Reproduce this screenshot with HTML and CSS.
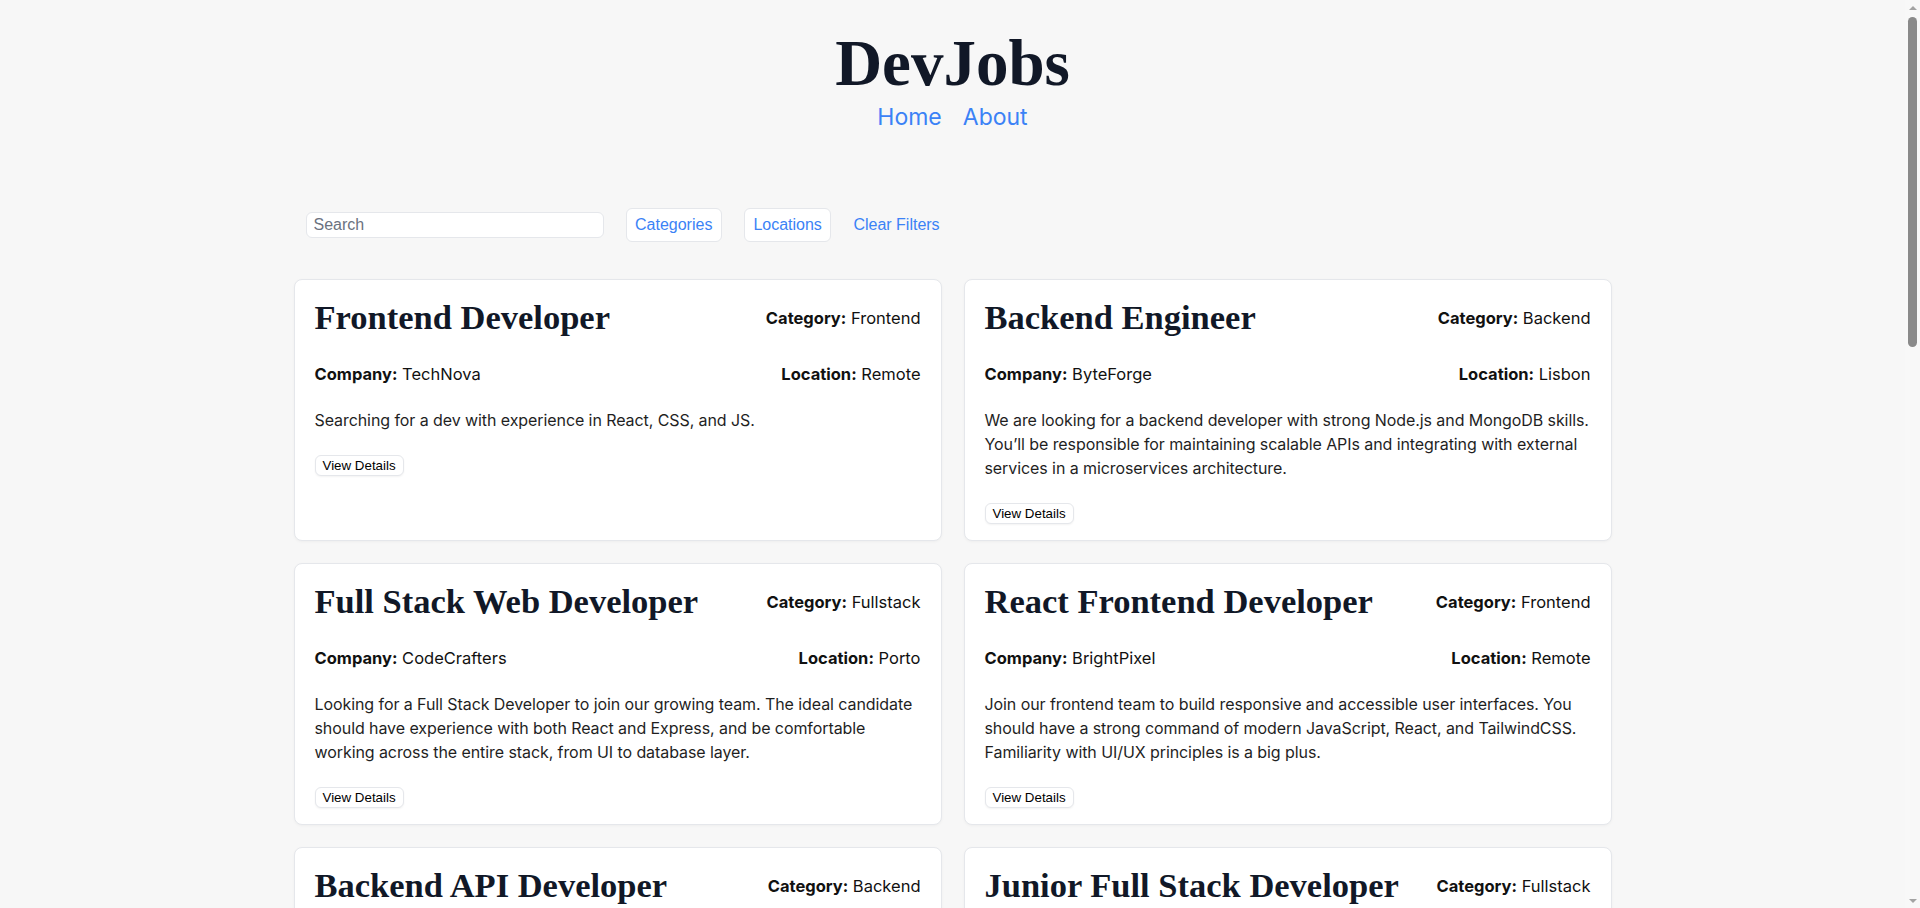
FILE: index.html
```html
<!DOCTYPE html>
<html lang="en">
<head>
<meta charset="utf-8">
<title>DevJobs</title>
<link rel="stylesheet" href="styles.css">
</head>
<body>
<div class="page">
<header class="site-header">
  <h1 class="logo">DevJobs</h1>
  <nav class="nav">
    <a href="#" class="nav-link">Home</a>
    <a href="#" class="nav-link">About</a>
  </nav>
</header>
<main class="container">
  <div class="filters">
    <input class="search" type="text" placeholder="Search">
    <button class="filter-btn">Categories</button>
    <button class="filter-btn">Locations</button>
    <button class="clear-btn">Clear Filters</button>
  </div>
  <div class="job-grid">
    <article class="card">
      <div class="card-head"><h2 class="job-title">Frontend Developer</h2><span class="meta"><b>Category:</b> Frontend</span></div>
      <div class="card-row"><span class="meta"><b>Company:</b> TechNova</span><span class="meta"><b>Location:</b> Remote</span></div>
      <p class="desc">Searching for a dev with experience in React, CSS, and JS.</p>
      <button class="view-btn">View Details</button>
    </article>
    <article class="card">
      <div class="card-head"><h2 class="job-title">Backend Engineer</h2><span class="meta"><b>Category:</b> Backend</span></div>
      <div class="card-row"><span class="meta"><b>Company:</b> ByteForge</span><span class="meta"><b>Location:</b> Lisbon</span></div>
      <p class="desc">We are looking for a backend developer with strong Node.js and MongoDB skills. You’ll be responsible for maintaining scalable APIs and integrating with external services in a microservices architecture.</p>
      <button class="view-btn">View Details</button>
    </article>
    <article class="card">
      <div class="card-head"><h2 class="job-title">Full Stack Web Developer</h2><span class="meta"><b>Category:</b> Fullstack</span></div>
      <div class="card-row"><span class="meta"><b>Company:</b> CodeCrafters</span><span class="meta"><b>Location:</b> Porto</span></div>
      <p class="desc">Looking for a Full Stack Developer to join our growing team. The ideal candidate should have experience with both React and Express, and be comfortable working across the entire stack, from UI to database layer.</p>
      <button class="view-btn">View Details</button>
    </article>
    <article class="card">
      <div class="card-head"><h2 class="job-title">React Frontend Developer</h2><span class="meta"><b>Category:</b> Frontend</span></div>
      <div class="card-row"><span class="meta"><b>Company:</b> BrightPixel</span><span class="meta"><b>Location:</b> Remote</span></div>
      <p class="desc">Join our frontend team to build responsive and accessible user interfaces. You should have a strong command of modern JavaScript, React, and TailwindCSS. Familiarity with UI/UX principles is a big plus.</p>
      <button class="view-btn">View Details</button>
    </article>
    <article class="card">
      <div class="card-head"><h2 class="job-title">Backend API Developer</h2><span class="meta"><b>Category:</b> Backend</span></div>
      <div class="card-row"><span class="meta"><b>Company:</b> CloudNest</span><span class="meta"><b>Location:</b> Braga</span></div>
      <p class="desc">We need a backend developer to design and maintain RESTful APIs using Express and PostgreSQL. Experience with authentication, caching strategies and automated testing is highly valued.</p>
      <button class="view-btn">View Details</button>
    </article>
    <article class="card">
      <div class="card-head"><h2 class="job-title">Junior Full Stack Developer</h2><span class="meta"><b>Category:</b> Fullstack</span></div>
      <div class="card-row"><span class="meta"><b>Company:</b> DevSpark</span><span class="meta"><b>Location:</b> Coimbra</span></div>
      <p class="desc">A great opportunity for a junior developer eager to learn. You will work with React on the frontend and Node.js on the backend, supported by experienced mentors in an agile team.</p>
      <button class="view-btn">View Details</button>
    </article>
    <article class="card">
      <div class="card-head"><h2 class="job-title">Vue.js Developer</h2><span class="meta"><b>Category:</b> Frontend</span></div>
      <div class="card-row"><span class="meta"><b>Company:</b> PixelWave</span><span class="meta"><b>Location:</b> Remote</span></div>
      <p class="desc">We are searching for a frontend developer with solid experience in Vue.js and Vuex. You will help us build fast single page applications and reusable component libraries for our clients.</p>
      <button class="view-btn">View Details</button>
    </article>
    <article class="card">
      <div class="card-head"><h2 class="job-title">Node.js Developer</h2><span class="meta"><b>Category:</b> Backend</span></div>
      <div class="card-row"><span class="meta"><b>Company:</b> ServerLab</span><span class="meta"><b>Location:</b> Lisbon</span></div>
      <p class="desc">Help us scale our platform by building reliable services with Node.js, Express and MongoDB. Knowledge of Docker, message queues and cloud deployments will be considered an advantage.</p>
      <button class="view-btn">View Details</button>
    </article>
    <article class="card">
      <div class="card-head"><h2 class="job-title">MERN Stack Developer</h2><span class="meta"><b>Category:</b> Fullstack</span></div>
      <div class="card-row"><span class="meta"><b>Company:</b> StackWorks</span><span class="meta"><b>Location:</b> Porto</span></div>
      <p class="desc">We are hiring a developer comfortable with MongoDB, Express, React and Node.js. You will own features end to end, from the database schema to the user interface and deployment.</p>
      <button class="view-btn">View Details</button>
    </article>
    <article class="card">
      <div class="card-head"><h2 class="job-title">UI Developer</h2><span class="meta"><b>Category:</b> Frontend</span></div>
      <div class="card-row"><span class="meta"><b>Company:</b> DesignHub</span><span class="meta"><b>Location:</b> Faro</span></div>
      <p class="desc">Turn beautiful designs into pixel perfect, accessible interfaces. Strong HTML, CSS and JavaScript skills are required, and experience with design systems and Figma is a plus.</p>
      <button class="view-btn">View Details</button>
    </article>
    <article class="card">
      <div class="card-head"><h2 class="job-title">Python Backend Developer</h2><span class="meta"><b>Category:</b> Backend</span></div>
      <div class="card-row"><span class="meta"><b>Company:</b> DataForge</span><span class="meta"><b>Location:</b> Remote</span></div>
      <p class="desc">Build and maintain backend services with Python and Django. You will collaborate with data engineers to deliver APIs that power analytics dashboards used by thousands of customers.</p>
      <button class="view-btn">View Details</button>
    </article>
    <article class="card">
      <div class="card-head"><h2 class="job-title">Full Stack Engineer</h2><span class="meta"><b>Category:</b> Fullstack</span></div>
      <div class="card-row"><span class="meta"><b>Company:</b> NextLayer</span><span class="meta"><b>Location:</b> Lisbon</span></div>
      <p class="desc">Work across our Next.js frontend and Node.js backend to ship new product features. We value clean code, code reviews and a pragmatic approach to solving real customer problems.</p>
      <button class="view-btn">View Details</button>
    </article>
    <article class="card">
      <div class="card-head"><h2 class="job-title">Angular Developer</h2><span class="meta"><b>Category:</b> Frontend</span></div>
      <div class="card-row"><span class="meta"><b>Company:</b> WebMatrix</span><span class="meta"><b>Location:</b> Aveiro</span></div>
      <p class="desc">Join a team building enterprise dashboards with Angular and TypeScript. Experience with RxJS, state management and unit testing frameworks is expected for this role.</p>
      <button class="view-btn">View Details</button>
    </article>
    <article class="card">
      <div class="card-head"><h2 class="job-title">DevOps Backend Engineer</h2><span class="meta"><b>Category:</b> Backend</span></div>
      <div class="card-row"><span class="meta"><b>Company:</b> InfraCore</span><span class="meta"><b>Location:</b> Remote</span></div>
      <p class="desc">Design CI/CD pipelines and maintain backend infrastructure on AWS. You should be comfortable with Linux, Docker and Kubernetes, and enjoy automating everything you can.</p>
      <button class="view-btn">View Details</button>
    </article>
  </div>
</main>
</div>
<div class="scrollbar" aria-hidden="true">
  <div class="sb-arrow sb-up"></div>
  <div class="sb-track"><div class="sb-thumb"></div></div>
  <div class="sb-arrow sb-down"></div>
</div>
</body>
</html>
```

FILE: styles.css
```css
* {
  box-sizing: border-box;
}

body {
  margin: 0;
  background: #f7f7f7;
  font-family: Inter, "Noto Sans", sans-serif;
  color: #111827;
}

.page {
  margin-right: 15px;
}

.site-header {
  padding-top: 30.5px;
  display: flex;
  flex-direction: column;
  align-items: center;
}

.logo {
  margin: 0;
  font-family: "Liberation Serif", serif;
  font-weight: 700;
  font-size: 65px;
  line-height: 1;
  color: #111827;
}

.nav {
  display: flex;
  gap: 21px;
  margin-top: 7px;
}

.nav-link {
  font-family: Inter, sans-serif;
  font-size: 23px;
  color: #3b82f6;
  text-decoration: none;
}

.container {
  width: 1318px;
  margin: 0 auto;
  padding-bottom: 150px;
}

.filters {
  display: flex;
  align-items: center;
  gap: 22px;
  padding-left: 12px;
  margin-top: 77.5px;
  height: 34px;
}

.search {
  width: 298px;
  height: 26px;
  border: 1px solid #e5e7eb;
  border-radius: 6px;
  padding: 2px 7px;
  font-family: "Liberation Sans", Arial, sans-serif;
  font-size: 16px;
  background: #fff;
  color: #111;
}

.search::placeholder {
  color: #6b7280;
}

.filter-btn {
  height: 34px;
  padding: 0 8.5px;
  border: 1px solid #e5e7eb;
  border-radius: 6px;
  background: #fff;
  color: #3b82f6;
  font-family: "Liberation Sans", Arial, sans-serif;
  font-size: 16px;
}

.clear-btn {
  border: 0;
  padding: 0;
  background: none;
  color: #3b82f6;
  font-family: "Liberation Sans", Arial, sans-serif;
  font-size: 16px;
}

.job-grid {
  margin-top: 37px;
  display: grid;
  grid-template-columns: 1fr 1fr;
  gap: 22px;
}

.card {
  background: #fff;
  border: 1px solid #e5e7eb;
  border-radius: 8px;
  padding: 18px 20px 16px;
  box-shadow: 0 1px 3px rgba(0, 0, 0, 0.04);
}

.card-head {
  display: flex;
  justify-content: space-between;
  align-items: center;
}

.job-title {
  margin: 0;
  font-family: "Liberation Serif", serif;
  font-weight: 700;
  font-size: 34.5px;
  line-height: 1.15;
  color: #111827;
}

.meta {
  font-size: 16.5px;
  line-height: 24px;
  color: #111;
}

.meta b {
  font-weight: 700;
}

.card-row {
  margin-top: 24px;
  display: flex;
  justify-content: space-between;
}

.desc {
  margin: 22.5px 0 0;
  font-size: 16px;
  line-height: 24px;
  letter-spacing: -0.08px;
  color: #1f1f1f;
}

.view-btn {
  display: block;
  margin-top: 23px;
  padding: 2px 7px;
  border: 1px solid #e5e7eb;
  border-radius: 6px;
  background: #fff;
  color: #000;
  font-family: "Liberation Sans", Arial, sans-serif;
  font-size: 13.33px;
  box-shadow: 0 1px 2px rgba(0, 0, 0, 0.05);
}

.scrollbar {
  position: fixed;
  top: 0;
  right: 0;
  width: 15px;
  height: 100vh;
  background: #f8f8f8;
  display: flex;
  flex-direction: column;
}

.sb-arrow {
  height: 15px;
  display: flex;
  align-items: center;
  justify-content: center;
}

.sb-up::before,
.sb-down::before {
  content: "";
  width: 0;
  height: 0;
  border-left: 4px solid transparent;
  border-right: 4px solid transparent;
}

.sb-up::before {
  border-bottom: 4px solid #a3a3a3;
}

.sb-down::before {
  border-top: 4px solid #a3a3a3;
}

.sb-track {
  flex: 1;
  padding: 2px 3px;
}

.sb-thumb {
  width: 9px;
  height: 330px;
  border-radius: 5px;
  background: #8a8a8a;
}
```
